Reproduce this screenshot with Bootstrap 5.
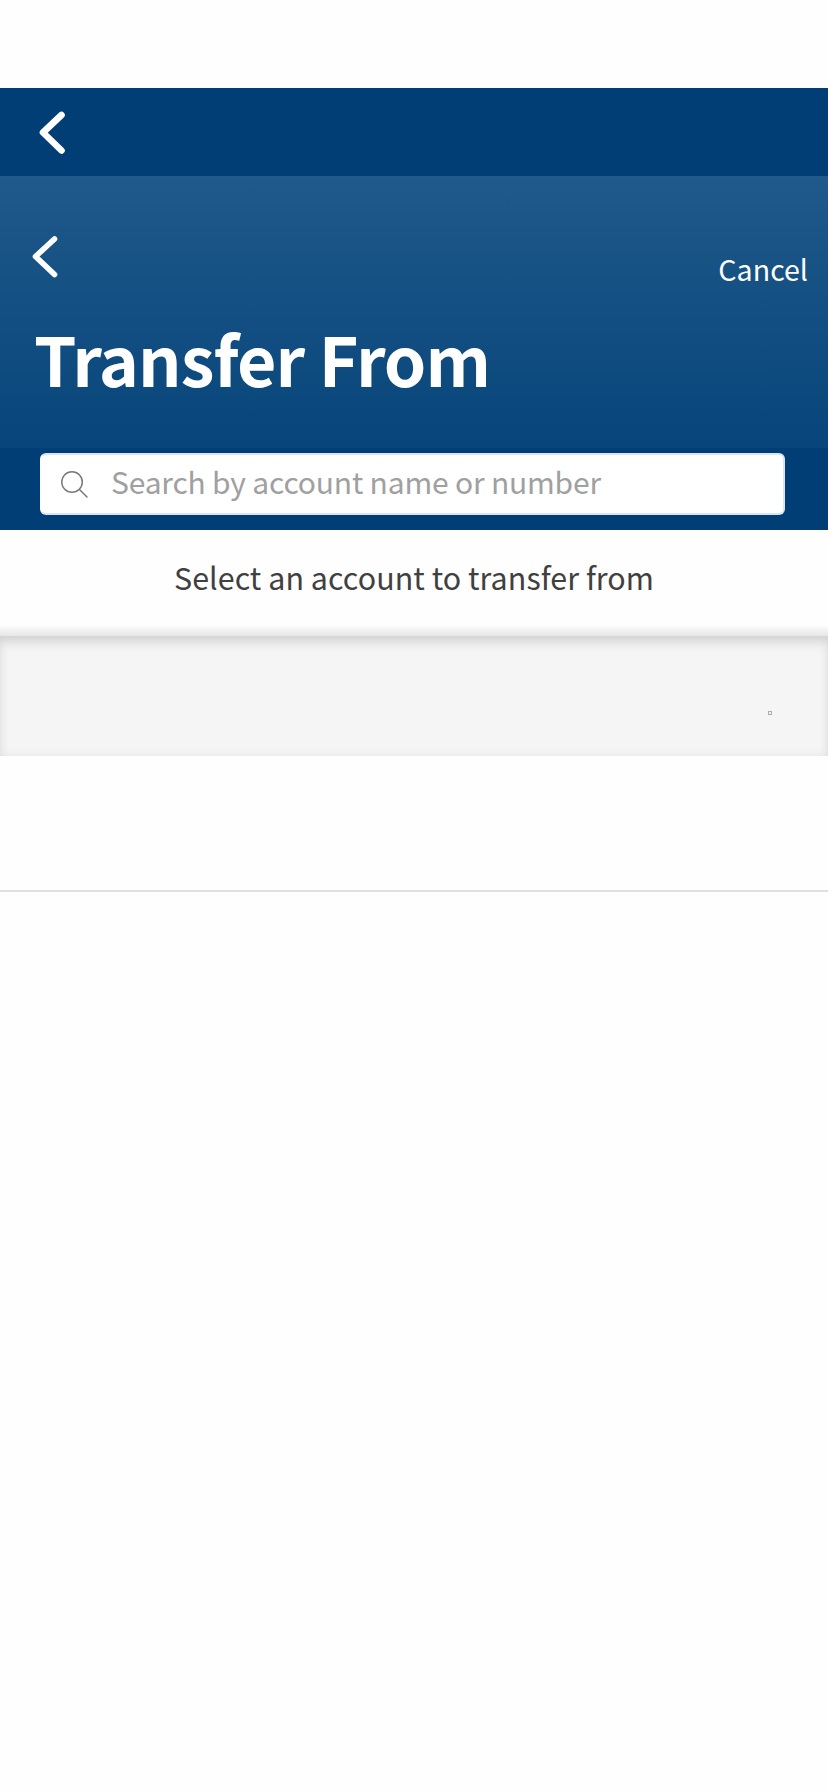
<!DOCTYPE html>
<html lang="en">
<head>
<meta charset="utf-8">
<meta name="viewport" content="width=device-width, initial-scale=1">
<title>Transfer From</title>
<link href="https://cdn.jsdelivr.net/npm/bootstrap@5.3.0/dist/css/bootstrap.min.css" rel="stylesheet">
<style>
body{font-family:"Noto Sans CJK SC","Noto Sans",sans-serif;background:#fefefe;color:#404041;min-height:1792px;overflow-x:hidden}
.status-space{height:88px}
.topbar{height:88px;background:#003e75;padding:23px 0 0 39px}
.hero{height:272px;background:linear-gradient(#20598b,#07457a);padding:59px 20px 0 32px}
.back{border:0;background:none;padding:0;line-height:0;display:block}
.cancel{font-size:28.6px;line-height:40px;color:#fff;text-decoration:none;margin-top:14px}
.page-title{font-size:68px;line-height:80px;font-weight:700;letter-spacing:-.95px;margin:29px 0 0 2px;white-space:nowrap;color:#fff}
.search-zone{height:82px;background:#003e75;padding:5px 43px 0 40px}
.search-box{height:62px;border:2px solid #d9e4f2;border-left-color:#fff;border-radius:6px;background:#fff;padding-left:19px}
.search-box input{font-size:30px;line-height:52px;height:52px;letter-spacing:-.19px;border:0;padding:0;margin-left:22px;background:none;outline:0;color:#404041}
.search-box input::placeholder{color:#a0a0a0;opacity:1}
.search-icon{margin-top:15px}
.hint{height:106px;font-size:30.4px;letter-spacing:.06px;line-height:94px;background:linear-gradient(#fefefe 95px,#e6e6e6)}
.group-head{height:120px;background:#f5f5f5;box-shadow:inset 0 9px 12px -4px #d0d0d0,inset 0 0 10px #e4e4e4;padding:75px 56px 0 0}
.missing{width:4px;height:4px;border:1px solid #adadad}
.account-row{height:136px;border-bottom:2px solid #e0e0e0}
</style>
</head>
<body>
<div class="status-space"></div>
<nav class="topbar">
  <button class="back" aria-label="Back"><svg width="28" height="44" viewBox="0 0 28 44" fill="none" stroke="#fff" stroke-width="6.6" stroke-linecap="round" stroke-linejoin="round"><path d="M22.5 4 4 21.5 22.5 39.5"/></svg></button>
</nav>
<header class="hero">
  <div class="d-flex justify-content-between align-items-start">
    <button class="back" aria-label="Back"><svg width="28" height="44" viewBox="0 0 28 44" fill="none" stroke="#fff" stroke-width="5.6" stroke-linecap="round" stroke-linejoin="round"><path d="M22.5 4 3.5 21.5 22.5 39.5"/></svg></button>
    <a class="cancel" href="#">Cancel</a>
  </div>
  <h1 class="page-title">Transfer From</h1>
</header>
<div class="search-zone">
  <div class="search-box d-flex align-items-start">
    <svg class="search-icon" width="28" height="30" viewBox="0 0 28 30" fill="none" stroke="#77787b" stroke-width="1.5" stroke-linecap="round"><circle cx="11" cy="12" r="10.3"/><path d="m18.5 19.5 7.5 7.5"/></svg>
    <input class="flex-grow-1" type="text" placeholder="Search by account name or number">
  </div>
</div>
<p class="hint text-center mb-0">Select an account to transfer from</p>
<section class="group-head d-flex justify-content-end"><span class="missing"></span></section>
<div class="account-row"></div>
<script src="https://cdn.jsdelivr.net/npm/bootstrap@5.3.0/dist/js/bootstrap.bundle.min.js"></script>
</body>
</html>
